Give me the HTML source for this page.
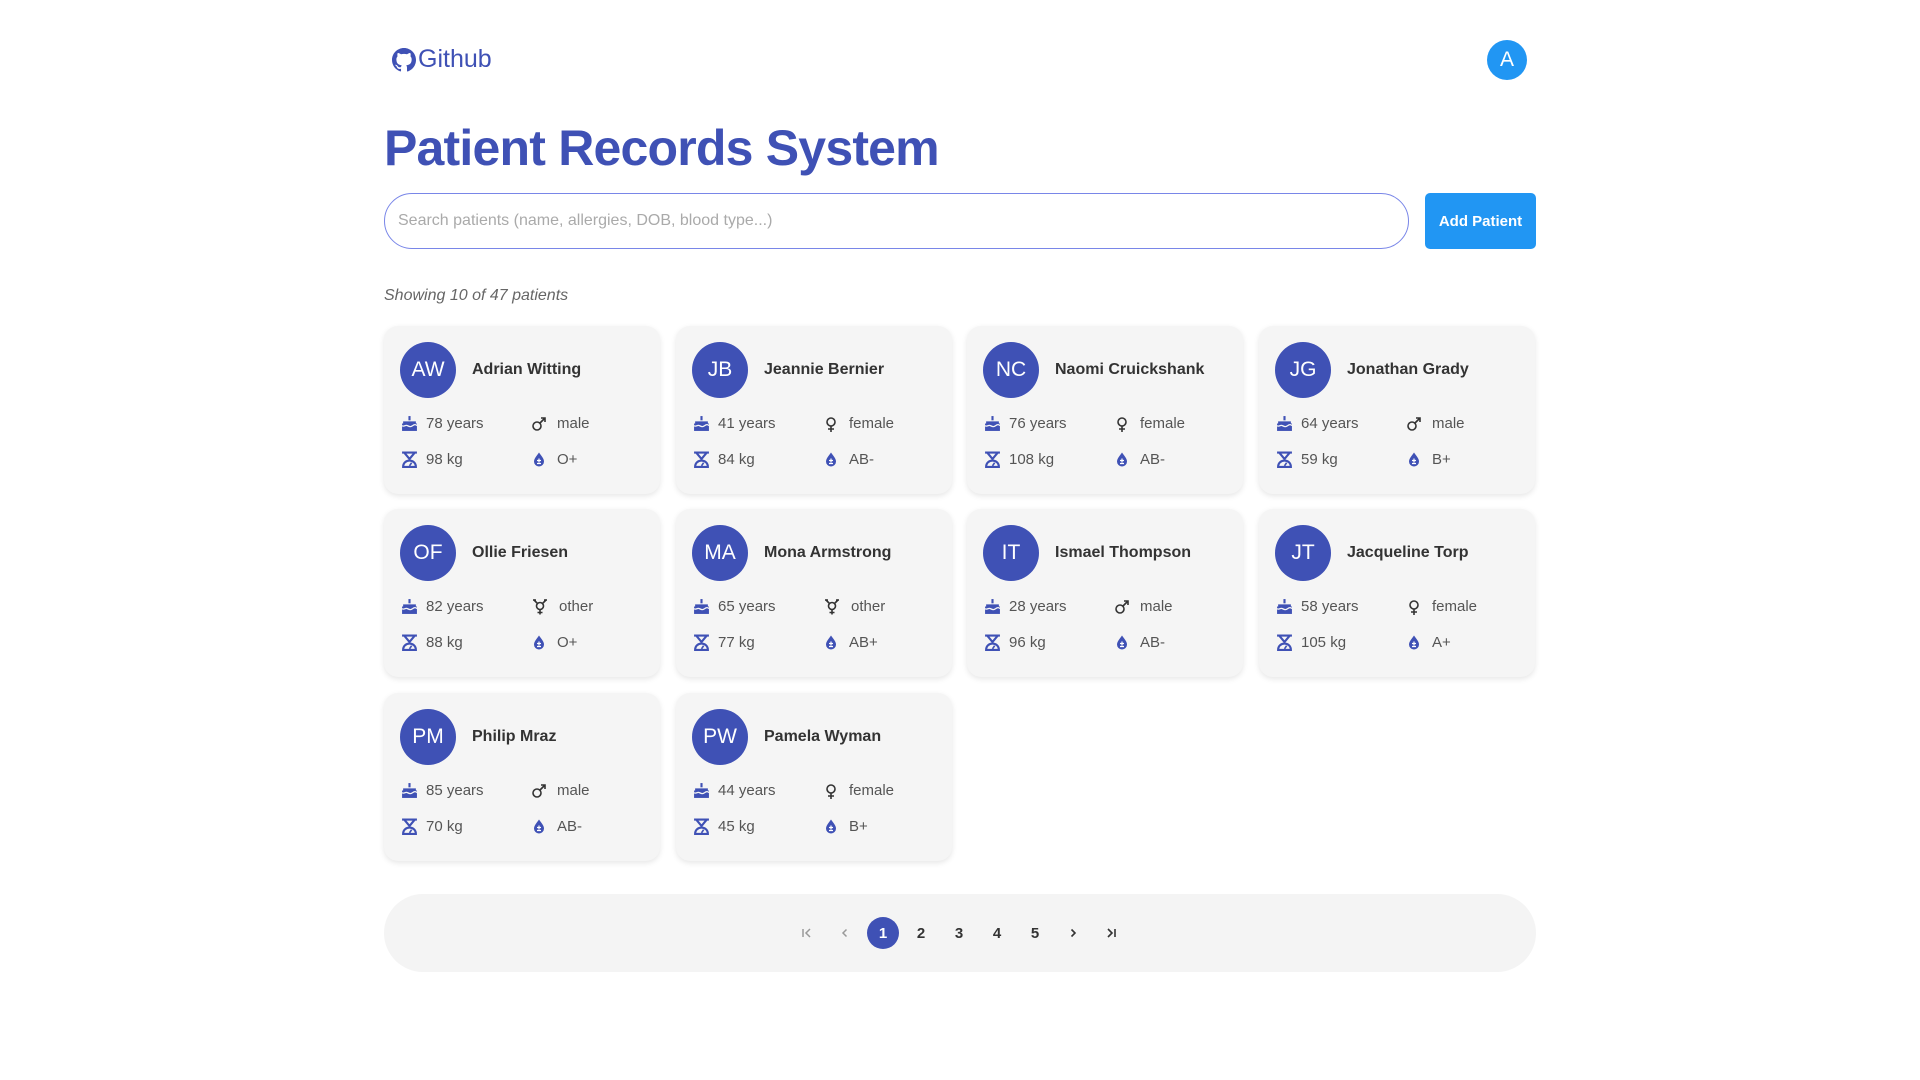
<!DOCTYPE html>
<html><head><meta charset="utf-8"><style>
*{box-sizing:border-box;margin:0;padding:0}
body{width:1920px;height:1080px;background:#fff;font-family:"Liberation Sans",sans-serif;position:relative;overflow:hidden;color:#333}
.gh{position:absolute;left:392px;top:45px;display:flex;align-items:center;color:#3f51b5;font-size:25px}
.gh svg{margin-right:2px}
.av{position:absolute;left:1487px;top:40px;width:40px;height:40px;border-radius:50%;background:#2196f3;color:#fff;font-size:21px;display:flex;align-items:center;justify-content:center}
h1{position:absolute;left:384px;top:119px;font-size:50px;font-weight:bold;color:#3f51b5;letter-spacing:-0.8px}
.search{position:absolute;left:384px;top:193px;width:1025px;height:56px;border:1.5px solid #7986e8;border-radius:28px;padding-left:13px;display:flex;align-items:center;color:#aaa;font-size:16px}
.btn{position:absolute;left:1425px;top:193px;width:111px;height:56px;border-radius:5px;background:#2196f3;color:#fff;font-weight:bold;font-size:15px;display:flex;align-items:center;justify-content:center}
.show{position:absolute;left:384px;top:287px;font-style:italic;color:#666;font-size:16px}
.card{position:absolute;width:276px;height:168px;background:#f5f5f5;border-radius:14px;box-shadow:0 2px 6px rgba(0,0,0,.1)}
.ca{position:absolute;left:16px;top:16px;width:56px;height:56px;border-radius:50%;background:#3f51b5;color:#fff;font-size:21px;display:flex;align-items:center;justify-content:center}
.nm{position:absolute;left:88px;top:35px;font-weight:bold;font-size:16px;color:#333}
.st{position:absolute;font-size:15px;color:#555;display:flex;align-items:center}
.st svg{margin-right:8px}
.pag{position:absolute;left:384px;top:894px;width:1152px;height:78px;background:#f4f4f4;border-radius:39px}
.pg{position:absolute;top:917px;width:32px;height:32px;border-radius:50%;display:flex;align-items:center;justify-content:center;font-size:15px;color:#333;font-weight:bold}
.pg.a{background:#3f51b5;color:#fff}
</style></head><body>
<div class="gh"><svg width="24" height="24" viewBox="0 0 16 16"><path fill="#3f51b5" d="M8 0C3.58 0 0 3.58 0 8c0 3.54 2.29 6.530 5.47 7.59.4.07.55-.17.55-.38v-1.34C3.79 14.36 3.31 12.8 3.31 12.8c-.36-.92-.89-1.17-.89-1.17-.73-.5.06-.49.06-.49.8.06 1.23.83 1.23.83.72 1.23 1.87.87 2.33.67.07-.52.28-.87.51-1.07-1.78-.2-3.64-.89-3.640-3.95 0-.87.31-1.590.82-2.15-.08-.2-.36-1.02.08-2.12 0 0 .67-.21 2.2.82.64-.18 1.32-.27 2-.27s1.36.09 2 .27c1.53-1.04 2.2-.82 2.2-.82.44 1.1.16 1.92.08 2.12.51.56.82 1.27.82 2.15 0 3.07-1.87 3.75-3.65 3.95.29.25.54.73.54 1.48v2.2c0 .21.15.46.55.38A8 8 0 0016 8c0-4.42-3.58-8-8-8z"/></svg>Github</div>
<div class="av">A</div>
<h1>Patient Records System</h1>
<div class="search">Search patients (name, allergies, DOB, blood type...)</div>
<div class="btn">Add Patient</div>
<div class="show">Showing 10 of 47 patients</div>
<div id="cards"></div>
<div class="pag"></div>
<div class="pg" style="left:791px"><svg width="14" height="14" viewBox="0 0 14 14"><path d="M3 3v8M10 3L6 7l4 4" stroke="#999" stroke-width="1.5" fill="none"/></svg></div>
<div class="pg" style="left:829px"><svg width="14" height="14" viewBox="0 0 14 14"><path d="M8.5 3.5L5 7l3.5 3.5" stroke="#999" stroke-width="1.5" fill="none"/></svg></div>
<div class="pg a" style="left:867px">1</div>
<div class="pg" style="left:905px">2</div>
<div class="pg" style="left:943px">3</div>
<div class="pg" style="left:981px">4</div>
<div class="pg" style="left:1019px">5</div>
<div class="pg" style="left:1057px"><svg width="14" height="14" viewBox="0 0 14 14"><path d="M5.5 3.5L9 7l-3.5 3.5" stroke="#333" stroke-width="1.6" fill="none"/></svg></div>
<div class="pg" style="left:1095px"><svg width="14" height="14" viewBox="0 0 14 14"><path d="M4 3l4 4-4 4M11 3v8" stroke="#333" stroke-width="1.6" fill="none"/></svg></div>
<script>
const d=[["AW","Adrian Witting",78,"male",98,"O+"],["JB","Jeannie Bernier",41,"female",84,"AB-"],["NC","Naomi Cruickshank",76,"female",108,"AB-"],["JG","Jonathan Grady",64,"male",59,"B+"],["OF","Ollie Friesen",82,"other",88,"O+"],["MA","Mona Armstrong",65,"other",77,"AB+"],["IT","Ismael Thompson",28,"male",96,"AB-"],["JT","Jacqueline Torp",58,"female",105,"A+"],["PM","Philip Mraz",85,"male",70,"AB-"],["PW","Pamela Wyman",44,"female",45,"B+"]];
const xs=[384,676,967,1259],ys=[326,509,693];
const cake='<svg width="17" height="17" viewBox="0 0 16 16"><rect x="7" y="1" width="2" height="4" fill="#3f51b5"/><path d="M1 8h14v7H1z" fill="#3f51b5"/><path d="M1 10c2 1.5 3-1 5 0s3 1.5 5 0 3-1 4 0" stroke="#f5f5f5" stroke-width="1.2" fill="none"/><rect x="2" y="6" width="12" height="2" fill="#3f51b5"/></svg>';
const scale='<svg width="17" height="17" viewBox="0 0 16 16"><path d="M1 1.5h14M3 1.5l5 6 5-6M2 15c0-4 3-6 6-6s6 2 6 6z" stroke="#3f51b5" stroke-width="2" fill="none"/><path d="M8 14l2-3" stroke="#3f51b5" stroke-width="1.5"/></svg>';
const drop='<svg width="16" height="17" viewBox="0 0 16 16"><path d="M8 1C6 4 3 7 3 10a5 5 0 0010 0c0-3-3-6-5-9z" fill="#3f51b5"/><path d="M6 9h4M8 7v4M6 12h4" stroke="#fff" stroke-width="1.2"/></svg>';
const g={male:'<svg width="16" height="16" viewBox="0 0 16 16"><circle cx="6" cy="10" r="4" stroke="#333" stroke-width="1.6" fill="none"/><path d="M9 7l5-5M10 2h4v4" stroke="#333" stroke-width="1.6" fill="none"/></svg>',
female:'<svg width="16" height="16" viewBox="0 0 16 16"><circle cx="8" cy="6" r="4" stroke="#333" stroke-width="1.6" fill="none"/><path d="M8 10v6M5 13h6" stroke="#333" stroke-width="1.6"/></svg>',
other:'<svg width="18" height="16" viewBox="0 0 18 16"><circle cx="9" cy="7" r="3.5" stroke="#333" stroke-width="1.6" fill="none"/><path d="M9 10.5v5M6.5 13.5h5M6.5 4.5l-4-4M2 1h3M11.5 4.5l4-4M13 1h3" stroke="#333" stroke-width="1.6"/></svg>'};
let h='';
d.forEach((p,i)=>{const x=xs[i%4],y=ys[Math.floor(i/4)];
h+=`<div class="card" style="left:${x}px;top:${y}px"><div class="ca">${p[0]}</div><div class="nm">${p[1]}</div>
<div class="st" style="left:17px;top:89px">${cake}${p[2]} years</div>
<div class="st" style="left:147px;top:89px">${g[p[3]]}<span style="margin-left:2px">${p[3]}</span></div>
<div class="st" style="left:17px;top:125px">${scale}${p[4]} kg</div>
<div class="st" style="left:147px;top:125px">${drop}<span style="margin-left:2px">${p[5]}</span></div></div>`});
document.getElementById('cards').innerHTML=h;
</script>
</body></html>
